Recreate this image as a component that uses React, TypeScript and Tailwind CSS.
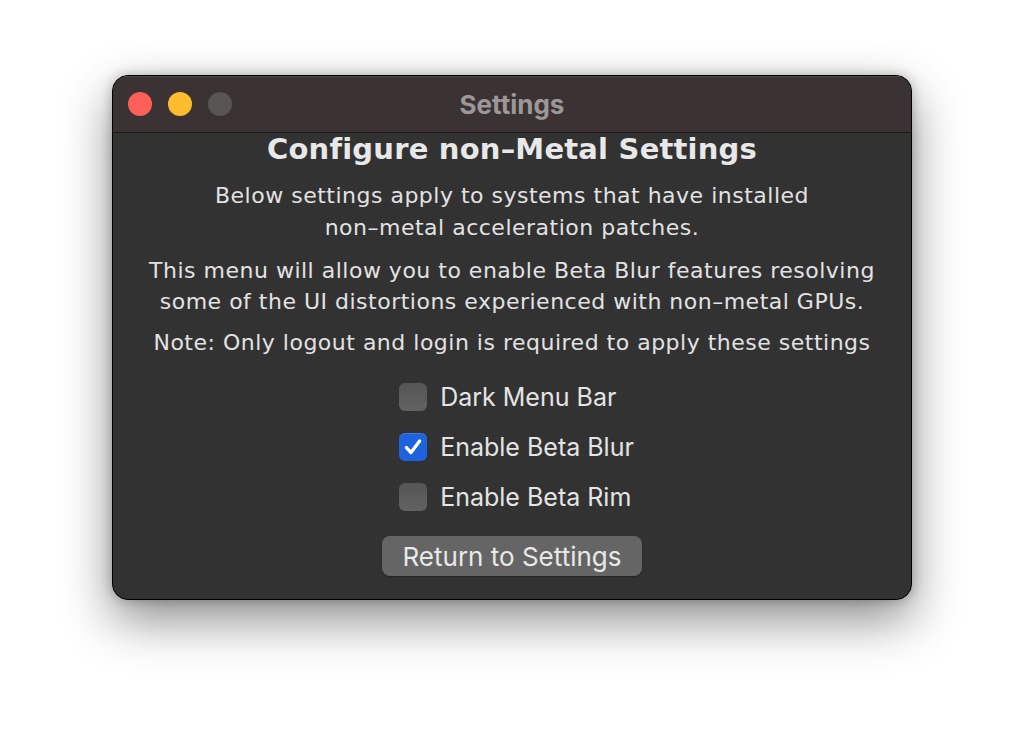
import React from "react";

const sys = { fontFamily: 'Inter, "Noto Sans", sans-serif' };

function Check({ checked, label }: { checked?: boolean; label: string }) {
  return (
    <div className="flex items-center gap-[13px] h-[28px]">
      {checked ? (
        <div className="w-[28px] h-[28px] rounded-[6px] bg-[#1d63e0] flex items-center justify-center shadow-[inset_0_1px_0_rgba(255,255,255,0.15)]">
          <svg width="22" height="22" viewBox="0 0 20 20">
            <path d="M4 10.5 L8.2 15 L16 4.5" fill="none" stroke="#ffffff" strokeWidth="3" strokeLinecap="round" strokeLinejoin="round" />
          </svg>
        </div>
      ) : (
        <div className="w-[28px] h-[28px] rounded-[6px] bg-gradient-to-b from-[#555555] to-[#626262]" />
      )}
      <span className="text-[25px] text-[#e4e4e4] leading-none" style={sys}>{label}</span>
    </div>
  );
}

export default function App() {
  return (
    <div
      className="w-[1024px] h-[748px] bg-white flex items-start justify-center pt-[75px]"
      style={{ fontFamily: '"DejaVu Sans", sans-serif' }}
    >
      <div className="w-[800px] h-[525px] rounded-[16px] border border-black bg-[#323232] shadow-[0_20px_50px_rgba(0,0,0,0.45),0_0_12px_rgba(0,0,0,0.25)] overflow-hidden flex flex-col ml-[0px]">
        <div className="h-[57px] bg-[#3a3233] border-b border-[#1a1a1a] flex items-center relative shrink-0 shadow-[inset_0_1px_0_rgba(255,255,255,0.12)]">
          <div className="flex gap-[16px] pl-[15px]">
            <div className="w-[24px] h-[24px] rounded-full bg-[#fe5f57]" />
            <div className="w-[24px] h-[24px] rounded-full bg-[#febc2e]" />
            <div className="w-[24px] h-[24px] rounded-full bg-[#5a5555]" />
          </div>
          <div className="absolute inset-0 flex items-center justify-center text-[26px] font-bold text-[#9c9898]" style={sys}>
            Settings
          </div>
        </div>
        <div className="flex flex-col items-center text-[#e2e2e2] text-center">
          <div className="text-[29px] font-bold text-[#e8e8e8] leading-[34px] mt-[-1px] tracking-[0.2px]">
            Configure non–Metal Settings
          </div>
          <div className="text-[22px] leading-[32px] mt-[14px] tracking-[0.5px]">
            Below settings apply to systems that have installed
            <br />
            non–metal acceleration patches.
          </div>
          <div className="text-[22px] leading-[31px] mt-[11px] tracking-[0.5px]">
            This menu will allow you to enable Beta Blur features resolving
            <br />
            some of the UI distortions experienced with non–metal GPUs.
          </div>
          <div className="text-[22px] leading-[32px] mt-[10px] tracking-[0.5px]">
            Note: Only logout and login is required to apply these settings
          </div>
          <div className="flex flex-col gap-[22px] mt-[24px] ml-[9px] self-center items-start">
            <Check label="Dark Menu Bar" />
            <Check checked label="Enable Beta Blur" />
            <Check label="Enable Beta Rim" />
          </div>
          <button className="mt-[25px] w-[260px] h-[40px] rounded-[8px] bg-[#656565] text-[26px] text-[#e8e8e8] shadow-[0_1px_1px_rgba(0,0,0,0.3)]" style={sys}>
            Return to Settings
          </button>
        </div>
      </div>
    </div>
  );
}
